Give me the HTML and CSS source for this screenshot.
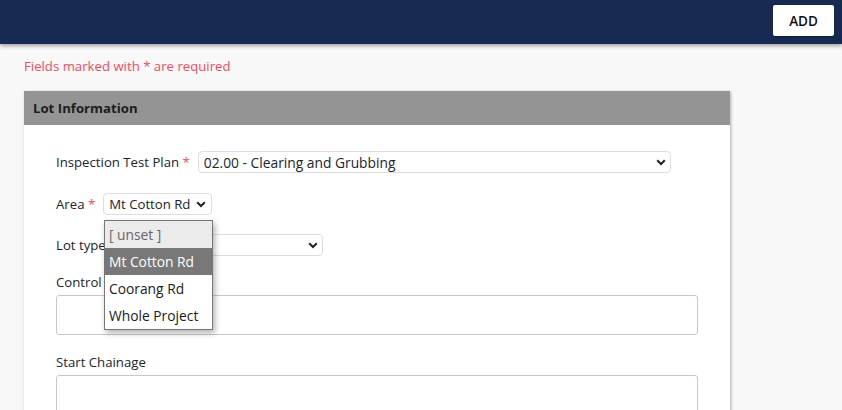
FILE: index.html
```html
<!DOCTYPE html>
<html>
<head>
<meta charset="utf-8">
<link rel="stylesheet" href="styles.css">
</head>
<body>
<header class="topbar">
  <button class="add-btn">ADD</button>
</header>
<main class="content">
  <p class="required-note">Fields marked with * are required</p>
  <section class="card">
    <div class="card-head">Lot Information</div>
    <div class="card-body">
      <div class="row">
        <label class="lbl">Inspection Test Plan <span class="req">*</span></label>
        <div class="select select-itp"><span>02.00 - Clearing and Grubbing</span><svg class="chev" viewBox="0 0 10 7"><path d="M1.2 1.3 L5 5 L8.8 1.3" fill="none" stroke="#222" stroke-width="2"/></svg></div>
      </div>
      <div class="row area-row">
        <label class="lbl">Area <span class="req">*</span></label>
        <div class="select select-area"><span>Mt Cotton Rd</span><svg class="chev" viewBox="0 0 10 7"><path d="M1.2 1.3 L5 5 L8.8 1.3" fill="none" stroke="#222" stroke-width="2"/></svg></div>
        <ul class="dropdown">
          <li class="opt unset">[ unset ]</li>
          <li class="opt active">Mt Cotton Rd</li>
          <li class="opt">Coorang Rd</li>
          <li class="opt">Whole Project</li>
        </ul>
      </div>
      <div class="row lot-row">
        <label class="lbl">Lot type <span class="req">*</span></label>
        <div class="select select-lot"><span></span><svg class="chev" viewBox="0 0 10 7"><path d="M1.2 1.3 L5 5 L8.8 1.3" fill="none" stroke="#222" stroke-width="2"/></svg></div>
      </div>
      <div class="field">
        <label class="lbl">Control Line</label>
        <div class="input"></div>
      </div>
      <div class="field">
        <label class="lbl">Start Chainage</label>
        <div class="input"></div>
      </div>
    </div>
  </section>
</main>
</body>
</html>
```
FILE: styles.css
```css
* { box-sizing: border-box; }
html, body { margin: 0; padding: 0; }
body {
  background: #f8f8f8;
  font-family: "Open Sans", "Noto Sans", sans-serif;
  font-size: 13.2px;
  color: #212529;
  width: 842px;
  height: 410px;
  overflow: hidden;
}
.topbar {
  height: 44px;
  background: #172a52;
  display: flex;
  justify-content: flex-end;
  align-items: flex-start;
  padding: 5px 8px 0 0;
  box-shadow: 0 2px 4px rgba(0,0,0,0.35);
  position: relative;
  z-index: 2;
}
.add-btn {
  width: 61px;
  height: 31px;
  background: #fff;
  border: none;
  border-radius: 2px;
  font-family: "Open Sans", sans-serif;
  font-size: 13.5px;
  font-weight: 600;
  color: #111;
  padding: 0;
  box-shadow: 0 1px 2px rgba(0,0,0,0.3);
}
.content {
  padding: 14px 0 0 24px;
}
.required-note {
  margin: 0 0 16px 0;
  color: #ef4b5f;
  line-height: 17px;
}
.card {
  width: 706px;
  background: #fff;
  box-shadow: 1px 1px 3px rgba(0,0,0,0.3);
}
.card-head {
  height: 34px;
  background: #949494;
  padding: 0 9px;
  display: flex;
  align-items: center;
  font-weight: 700;
  color: #1c1c1c;
}
.card-body {
  padding: 26px 32px 0 32px;
  height: 300px;
}
.row {
  display: flex;
  align-items: center;
  gap: 8px;
  height: 22px;
  margin-bottom: 20px;
  position: relative;
}
.lbl { color: #212529; white-space: nowrap; }
.req { color: #ef4b5f; }
.select {
  height: 22px;
  border: 1px solid #dedede;
  border-radius: 4px;
  display: flex;
  align-items: center;
  justify-content: space-between;
  padding: 0 4px 0 5px;
  background: #fff;
  color: #212529;
  font-size: 13.8px;
}
.chev { width: 10px; height: 7px; flex: none; }
.select-itp { width: 473px; }
.select-area { width: 109px; font-size: 13.2px; padding-left: 5px; padding-right: 5px; }
.select-lot { width: 199px; }
.lot-row { margin-bottom: 17px; margin-top: -1px; }
.dropdown {
  position: absolute;
  left: 48px;
  top: 27px;
  width: 109px;
  margin: 0;
  padding: 0;
  list-style: none;
  border: 1px solid #767676;
  background: #fff;
  box-shadow: 2px 3px 6px rgba(0,0,0,0.3);
  z-index: 5;
  font-size: 13.8px;
}
.opt {
  height: 27px;
  line-height: 27px;
  padding: 0 4px;
  color: #1a1a1a;
  white-space: nowrap;
}
.opt.unset { background: #ebebeb; color: #666; }
.opt.active { background: #787878; color: #fff; }
.field .lbl { display: block; line-height: 18px; margin-bottom: 4px; }
.input {
  width: 642px;
  height: 40px;
  border: 1px solid #c8c8c8;
  border-radius: 3px;
  margin-bottom: 18px;
}
```
